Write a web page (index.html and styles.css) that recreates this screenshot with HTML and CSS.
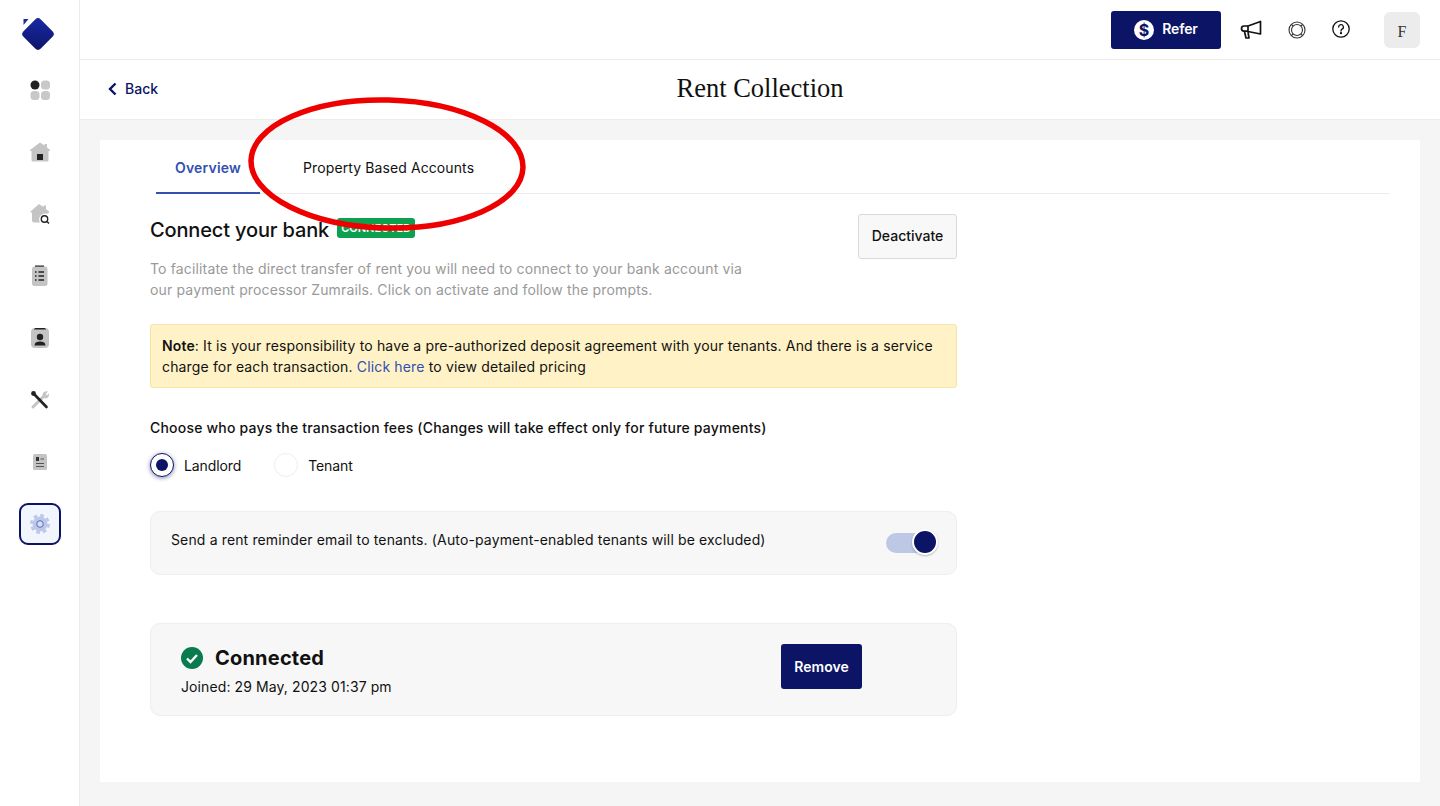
FILE: index.html
```html
<!DOCTYPE html>
<html lang="en">
<head>
    <meta charset="UTF-8">
    <meta name="viewport" content="width=device-width, initial-scale=1.0">
    <title>Rent Collection</title>
    <link rel="stylesheet" href="styles.css">
</head>
<body>
    <div class="app">
        <!-- Sidebar -->
        <aside class="sidebar">
            <div class="logo">
                <svg width="36" height="36" viewBox="0 0 36 36">
                    <defs>
                        <linearGradient id="logo-fill" x1="0" y1="0" x2="1" y2="1">
                            <stop offset="0" stop-color="#1a2aa8"/>
                            <stop offset="1" stop-color="#0c1466"/>
                        </linearGradient>
                    </defs>
                    <rect x="5.750" y="5.750" width="24.500" height="24.500" rx="4" fill="url(#logo-fill)" transform="rotate(45 18 18)"/>
                    <path d="M3.500 3 H8.500 L3.500 9 Z" fill="#1a2aa8"/>
                </svg>
            </div>
            <a class="side-item" href="#">
                <svg width="22" height="22" viewBox="0 0 22 22">
                    <circle cx="6" cy="6" r="4.500" fill="#222"/>
                    <rect x="12" y="1.500" width="9" height="9" rx="3.500" fill="#c8c8c8"/>
                    <rect x="1.500" y="12" width="9" height="9" rx="3.500" fill="#c8c8c8"/>
                    <rect x="12" y="12" width="9" height="9" rx="3.500" fill="#c8c8c8"/>
                </svg>
            </a>
            <a class="side-item" href="#">
                <svg width="22" height="22" viewBox="0 0 22 22">
                    <path d="M11 1.500 L15.500 4.500 V3 H18 V6.500 L21 9 V10 H19.500 V19 Q19.500 20.500 18 20.500 H4 Q2.500 20.500 2.500 19 V10 H1 V9 Z" fill="#c4c4c4"/>
                    <rect x="8" y="13" width="6" height="6" fill="#222"/>
                </svg>
            </a>
            <a class="side-item" href="#">
                <svg width="22" height="22" viewBox="0 0 22 22">
                    <path d="M10 1 L14.500 4 V2.500 H17 V6 L20 8.500 V10 H18.500 V11 A6 6 0 0 0 11 19.500 H5 Q3 19.500 3 17.500 V9.500 H1.500 V8.500 Z" fill="#c4c4c4"/>
                    <circle cx="15.500" cy="16" r="3.200" fill="none" stroke="#222" stroke-width="1.400"/>
                    <path d="M18 18.500 L20 20.500" stroke="#222" stroke-width="1.400"/>
                </svg>
            </a>
            <a class="side-item" href="#">
                <svg width="22" height="22" viewBox="0 0 22 22">
                    <rect x="3" y="1.500" width="15.500" height="19.500" rx="2.500" fill="#c4c4c4"/>
                    <rect x="6" y="0.500" width="9" height="1.200" fill="#222"/>
                    <path d="M6 7 H7.500 M9.500 7 H15 M6 11 H7.500 M9.500 11 H15 M6 15 H7.500 M9.500 15 H15" stroke="#222" stroke-width="1.500"/>
                </svg>
            </a>
            <a class="side-item" href="#">
                <svg width="22" height="22" viewBox="0 0 22 22">
                    <rect x="2" y="1" width="18" height="20" rx="4" fill="#c4c4c4"/>
                    <path d="M5 2.500 Q5 1 7 1 H15 Q17 1 17 2.500 Z" fill="#222"/>
                    <circle cx="11" cy="10" r="3.200" fill="#222"/>
                    <path d="M5.500 18.500 Q5.500 14.500 11 14.500 Q16.500 14.500 16.500 18.500 Z" fill="#222"/>
                </svg>
            </a>
            <a class="side-item" href="#">
                <svg width="22" height="22" viewBox="0 0 22 22">
                    <path d="M4 18 L16 6" stroke="#c4c4c4" stroke-width="3" stroke-linecap="round"/>
                    <path d="M13.500 6 A4 4 0 0 1 19 2.500 L16.500 5 L18 6.500 L20 4.500 A4 4 0 0 1 16 9.500 Z" fill="#c4c4c4"/>
                    <path d="M5 5 L17.500 18" stroke="#222" stroke-width="2.600" stroke-linecap="round"/>
                    <circle cx="4.500" cy="4.500" r="2.400" fill="#222"/>
                </svg>
            </a>
            <a class="side-item" href="#">
                <svg width="22" height="22" viewBox="0 0 22 22">
                    <rect x="4" y="3" width="14" height="16" rx="1.500" fill="#c4c4c4"/>
                    <rect x="7" y="6" width="3" height="4" fill="#333"/>
                    <path d="M11.500 8 H15 M7 12.500 H15 M7 15.500 H15" stroke="#555" stroke-width="1.200"/>
                </svg>
            </a>
            <a class="side-item active" href="#">
                <svg width="22" height="22" viewBox="0 0 22 22">
                    <circle cx="11" cy="11" r="7.500" fill="#bcc8e8"/>
                    <circle cx="11" cy="11" r="8.500" fill="none" stroke="#bcc8e8" stroke-width="3" stroke-dasharray="3.600 3.076"/>
                    <circle cx="11" cy="11" r="3.300" fill="#d6def4" stroke="#4a5db8" stroke-width="0.900"/>
                </svg>
            </a>
        </aside>

        <div class="content">
            <!-- Top bar -->
            <header class="topbar">
                <button class="refer-btn">
                    <svg width="20" height="20" viewBox="0 0 20 20">
                        <circle cx="10" cy="10" r="10" fill="#fff"/>
                        <text x="10" y="15.500" text-anchor="middle" class="dollar">$</text>
                    </svg>
                    <span class="refer-label">Refer</span>
                </button>
                <svg class="top-icon megaphone" width="22" height="22" viewBox="0 0 22 22" fill="none" stroke="#111" stroke-width="1.700" stroke-linejoin="round">
                    <path d="M8 7 L20.500 2.500 V15 L8 12.500 Z"/>
                    <path d="M8 7 H4 Q1.500 7 1.500 9.500 Q1.500 12 4 12.200 H8"/>
                    <path d="M4.500 12.500 L6 19 H9 L8 13"/>
                </svg>
                <svg class="top-icon support" width="18" height="18" viewBox="0 0 18 18" fill="none" stroke="#333" stroke-width="1.100">
                    <circle cx="9" cy="9" r="8"/>
                    <circle cx="9" cy="9" r="5.500"/>
                    <path d="M3.500 3.500 L5.200 5.200 M14.500 3.500 L12.800 5.200 M3.500 14.500 L5.200 12.800 M14.500 14.500 L12.800 12.800"/>
                </svg>
                <svg class="top-icon help" width="18" height="18" viewBox="0 0 18 18" fill="none" stroke="#111" stroke-width="1.300">
                    <circle cx="9" cy="9" r="8.200"/>
                    <path d="M6.600 7 A2.400 2.400 0 1 1 10 9.200 Q9 9.700 9 11" stroke-linecap="round"/>
                    <circle cx="9" cy="13.200" r="0.500" fill="#111"/>
                </svg>
                <div class="avatar">F</div>
            </header>

            <!-- Page title -->
            <div class="subheader">
                <a class="back" href="#">
                    <svg width="10" height="14" viewBox="0 0 10 14" fill="none" stroke="#0c1466" stroke-width="2.400">
                        <path d="M8.500 1.500 L3 7 L8.500 12.500"/>
                    </svg>
                    Back
                </a>
                <h1>Rent Collection</h1>
            </div>

            <main class="main">
                <section class="card">
                    <div class="tabs">
                        <a class="tab active" href="#">Overview</a>
                        <a class="tab" href="#">Property Based Accounts</a>
                    </div>

                    <div class="panel">
                        <div class="connect-head">
                            <div>
                                <div class="connect-title">
                                    <h2>Connect your bank</h2>
                                    <span class="badge">CONNECTED</span>
                                </div>
                                <p class="connect-text">To facilitate the direct transfer of rent you will need to connect to your bank account via our payment processor Zumrails. Click on activate and follow the prompts.</p>
                            </div>
                            <button class="deactivate-btn">Deactivate</button>
                        </div>

                        <div class="note">
                            <b>Note</b>: It is your responsibility to have a pre-authorized deposit agreement with your tenants. And there is a service charge for each transaction. <a href="#">Click here</a> to view detailed pricing
                        </div>

                        <p class="fees-label">Choose who pays the transaction fees (Changes will take effect only for future payments)</p>
                        <div class="radios">
                            <label class="radio-item"><span class="radio checked"></span>Landlord</label>
                            <label class="radio-item"><span class="radio"></span>Tenant</label>
                        </div>

                        <div class="reminder">
                            <span>Send a rent reminder email to tenants. (Auto-payment-enabled tenants will be excluded)</span>
                            <span class="toggle"><span class="knob"></span></span>
                        </div>

                        <div class="connected">
                            <div>
                                <div class="connected-title">
                                    <svg width="22" height="22" viewBox="0 0 22 22">
                                        <circle cx="11" cy="11" r="11" fill="#0a7a4f"/>
                                        <path d="M6 11.500 L9.500 15 L16 8" fill="none" stroke="#fff" stroke-width="2.400"/>
                                    </svg>
                                    <h3>Connected</h3>
                                </div>
                                <p class="joined">Joined: 29 May, 2023 01:37 pm</p>
                            </div>
                            <button class="remove-btn">Remove</button>
                        </div>
                    </div>
                </section>
            </main>
        </div>
    </div>

    <!-- Red annotation over the tabs -->
    <svg class="annotation" width="290" height="145" viewBox="0 0 290 145">
        <ellipse cx="145" cy="72" rx="136" ry="64" fill="none" stroke="#ee0000" stroke-width="5.500" transform="rotate(1.500 145 72)"/>
    </svg>
</body>
</html>
```

FILE: styles.css
```css
/* General Styles */
* {
    box-sizing: border-box;
}

body {
    font-family: Inter, "Noto Sans", sans-serif;
    margin: 0;
    padding: 0;
    background-color: #f5f5f5;
    color: #111;
    height: 806px;
    overflow: hidden;
}

a {
    text-decoration: none;
}

button {
    font-family: inherit;
    cursor: pointer;
}

.app {
    display: flex;
    height: 806px;
}

/* Sidebar */
.sidebar {
    width: 80px;
    flex-shrink: 0;
    background-color: white;
    border-right: 1px solid #ececec;
    display: flex;
    flex-direction: column;
    align-items: center;
    padding-top: 16px;
}

.logo {
    height: 36px;
    margin: 0 4px 17px 0;
}

.side-item {
    width: 42px;
    height: 42px;
    margin-bottom: 20px;
    border-radius: 9px;
    display: flex;
    align-items: center;
    justify-content: center;
}

.side-item.active {
    background-color: #f1f5fe;
    border: 2px solid #0c1466;
}

/* Top bar */
.content {
    flex: 1;
    min-width: 0;
    display: flex;
    flex-direction: column;
}

.topbar {
    height: 60px;
    background-color: white;
    border-bottom: 1px solid #ececec;
    display: flex;
    align-items: center;
    padding-right: 20px;
}

.refer-btn {
    margin-left: auto;
    width: 110px;
    height: 38px;
    background-color: #0c1466;
    color: white;
    border: none;
    border-radius: 3px;
    font-size: 14px;
    font-weight: 600;
    display: flex;
    align-items: center;
    justify-content: center;
    gap: 8px;
}

.refer-label {
    margin-top: -2px;
    letter-spacing: -0.1px;
}

.dollar {
    font-family: Inter, sans-serif;
    font-size: 16px;
    font-weight: 700;
    fill: #0c1466;
}

.megaphone {
    margin-left: 19px;
}

.support {
    margin-left: 26px;
}

.help {
    margin-left: 26px;
    margin-top: -2px;
}

.avatar {
    width: 36px;
    height: 36px;
    margin-left: 34px;
    padding-top: 4px;
    background-color: #ececec;
    border-radius: 6px;
    font-family: "Liberation Serif", serif;
    font-size: 16px;
    color: #333;
    display: flex;
    align-items: center;
    justify-content: center;
}

/* Page title */
.subheader {
    position: relative;
    height: 60px;
    background-color: white;
    border-bottom: 1px solid #ececec;
    display: flex;
    align-items: center;
    justify-content: center;
}

.subheader h1 {
    margin: -2px 0 0;
    font-family: "Liberation Serif", serif;
    font-size: 26.500px;
    font-weight: 400;
    color: #111;
}

.back {
    position: absolute;
    left: 27px;
    top: 20px;
    display: flex;
    align-items: center;
    gap: 8px;
    color: #0c1466;
    font-size: 14px;
    font-weight: 500;
}

/* Main card */
.main {
    flex: 1;
    padding: 20px 20px 24px;
}

.card {
    height: 642px;
    background-color: white;
    padding: 0 30px 0 50px;
}

.tabs {
    display: flex;
    height: 54px;
    margin-left: 6px;
    border-bottom: 1px solid #ececec;
}

.tab {
    height: 54px;
    padding: 19px 19px 0;
    font-size: 14px;
    line-height: 17px;
    letter-spacing: 0.1px;
    color: #111;
    margin-right: 24px;
}

.tab.active {
    color: #3350b0;
    font-weight: 600;
    letter-spacing: 0.2px;
    border-bottom: 2px solid #3350b0;
}

.panel {
    width: 807px;
}

/* Connect section */
.connect-head {
    display: flex;
    justify-content: space-between;
    align-items: flex-start;
    padding-top: 20px;
}

.connect-title {
    display: flex;
    align-items: center;
    gap: 8px;
    margin-top: 2px;
}

.connect-title h2 {
    margin: 0;
    font-size: 20px;
    line-height: 28px;
    font-weight: 500;
    letter-spacing: -0.15px;
}

.badge {
    height: 20px;
    padding: 0 4px;
    background-color: #0ca14f;
    color: white;
    border-radius: 3px;
    font-size: 11px;
    font-weight: 600;
    line-height: 20px;
    margin-top: -4px;
}

.connect-text {
    width: 610px;
    margin: 14px 0 0;
    font-size: 14px;
    line-height: 21px;
    letter-spacing: 0.15px;
    color: #999;
}

.deactivate-btn {
    width: 99px;
    height: 45px;
    padding-bottom: 3px;
    background-color: #f8f8f8;
    border: 1px solid #d9d9d9;
    border-radius: 3px;
    font-size: 14px;
    font-weight: 500;
    color: #111;
}

.note {
    margin-top: 24px;
    padding: 10px 11px;
    height: 64px;
    background-color: #fff2c6;
    border: 1px solid #f5e3a8;
    border-radius: 3px;
    font-size: 14px;
    line-height: 21px;
    letter-spacing: 0.15px;
    color: #111;
}

.note b {
    font-weight: 600;
}

.note a {
    color: #3350b0;
}

/* Fee radios */
.fees-label {
    margin: 31px 0 0;
    font-size: 14px;
    line-height: 17px;
    letter-spacing: 0.2px;
    font-weight: 500;
}

.radios {
    display: flex;
    gap: 33px;
    margin-top: 17px;
}

.radio-item {
    display: flex;
    align-items: center;
    gap: 10px;
    font-size: 14px;
    letter-spacing: -0.1px;
}

.radio {
    width: 24px;
    height: 24px;
    border-radius: 50%;
    border: 1px solid #eee;
    background-color: white;
    display: flex;
    align-items: center;
    justify-content: center;
}

.radio.checked {
    border: 1px solid #0c1466;
    box-shadow: 0 1px 4px rgba(12, 20, 102, 0.5);
}

.radio.checked::after {
    content: "";
    width: 12px;
    height: 12px;
    border-radius: 50%;
    background-color: #0c1466;
}

/* Reminder box */
.reminder {
    margin-top: 34px;
    height: 64px;
    padding: 0 20px 8px;
    background-color: #f7f7f7;
    border: 1px solid #eeeeee;
    border-radius: 10px;
    font-size: 14px;
    letter-spacing: 0.14px;
    display: flex;
    align-items: center;
    justify-content: space-between;
}

.toggle {
    position: relative;
    width: 40px;
    height: 20px;
    margin: 8px 10px 0 0;
    background-color: #bcc8e4;
    border-radius: 10px;
}

.knob {
    position: absolute;
    right: -12px;
    top: -4px;
    width: 26px;
    height: 26px;
    border-radius: 50%;
    background-color: #0c1466;
    border: 2px solid white;
    box-shadow: 0 1px 2px rgba(0, 0, 0, 0.25);
}

/* Connected box */
.connected {
    margin-top: 48px;
    height: 93px;
    padding: 20px 94px 0 30px;
    background-color: #f7f7f7;
    border: 1px solid #eeeeee;
    border-radius: 10px;
    display: flex;
    align-items: flex-start;
    justify-content: space-between;
}

.connected-title {
    display: flex;
    align-items: center;
    gap: 12px;
    margin-top: 2px;
}

.connected-title h3 {
    margin: 0;
    font-size: 20px;
    line-height: 24px;
    font-weight: 700;
    letter-spacing: 0.2px;
}

.joined {
    margin: 8px 0 0;
    font-size: 14px;
    line-height: 17px;
    letter-spacing: 0.1px;
}

.remove-btn {
    width: 81px;
    height: 45px;
    background-color: #0c1466;
    color: white;
    border: none;
    border-radius: 3px;
    font-size: 14px;
    font-weight: 600;
}

/* Annotation */
.annotation {
    position: absolute;
    left: 242px;
    top: 92px;
}
```
